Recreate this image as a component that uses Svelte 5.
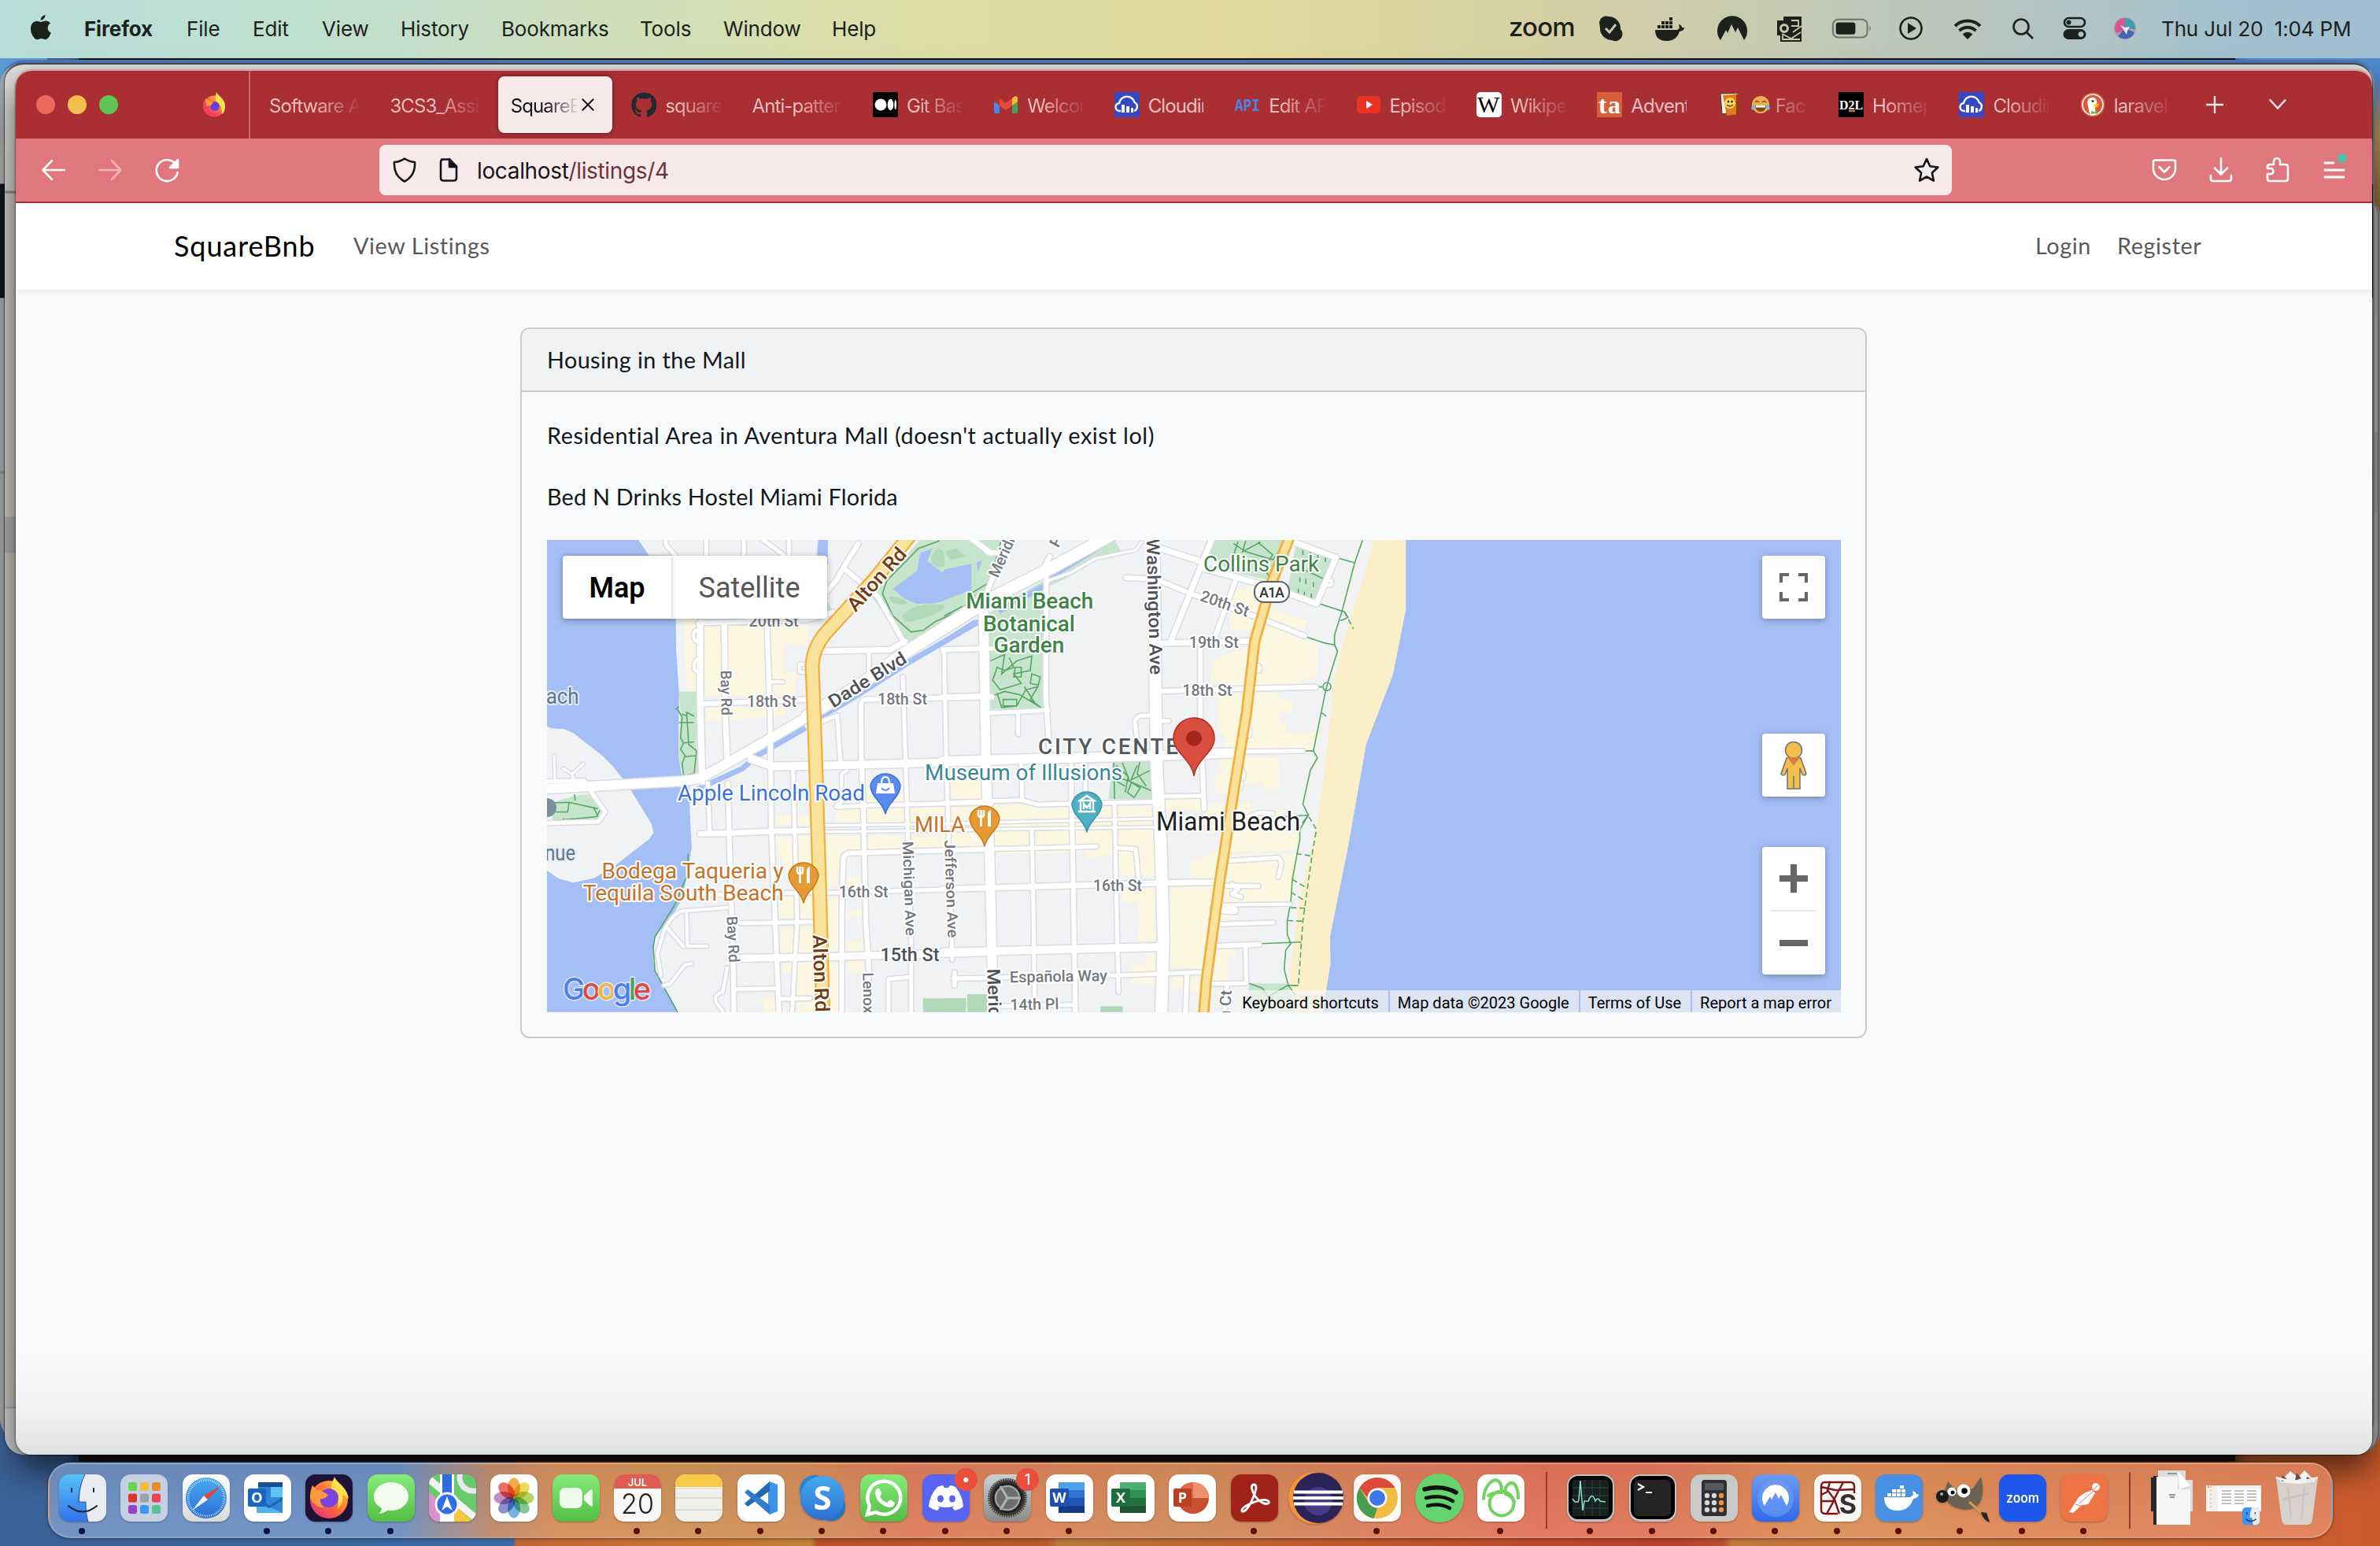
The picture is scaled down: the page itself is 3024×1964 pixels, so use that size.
<script>
  const menus = ['File', 'Edit', 'View', 'History', 'Bookmarks', 'Tools', 'Window', 'Help'];

  const tabs = [
    { label: 'Software A' },
    { label: '3CS3_Assi' },
    { label: 'SquareB', active: true },
    { icon: 'github', label: 'square' },
    { label: 'Anti-patter' },
    { icon: 'medium', label: 'Git Bas' },
    { icon: 'gmail', label: 'Welcom' },
    { icon: 'cloudinary', label: 'Cloudin', hard: true },
    { icon: 'api', label: 'Edit AP' },
    { icon: 'youtube', label: 'Episod' },
    { icon: 'wikipedia', label: 'Wikipe' },
    { icon: 'ta', label: 'Advent', hard: true },
    { icon: 'book', label: 'Fac', emoji: true },
    { icon: 'd2l', label: 'Homep' },
    { icon: 'cloudinary', label: 'Cloudin' },
    { icon: 'duck', label: 'laravel' }
  ];

  const apps = [
    ['finder', 1], ['launchpad', 0], ['safari', 0], ['outlook', 1], ['firefox', 1], ['messages', 1],
    ['maps', 0], ['photos', 0], ['facetime', 0], ['calendar', 1], ['notes', 1], ['vscode', 1],
    ['skype', 1], ['whatsapp', 1], ['discord', 1], ['settings', 1], ['word', 1], ['excel', 0],
    ['powerpoint', 0], ['acrobat', 1], ['eclipse', 0], ['chrome', 1], ['spotify', 0], ['mongo', 1]
  ];
  const recents = [
    ['activity', 1], ['terminal', 1], ['calculator', 1], ['nord', 1], ['spyder', 1],
    ['docker', 1], ['gimp', 1], ['zoom', 1], ['postman', 1]
  ];

  // The map is surveyed on two sheets, west and east, that share one scale.
  const SX = 0.3827;
  const SY = 0.4082;
  const west = `translate(-35 -26) scale(${SX} ${SY})`;
  const east = `translate(505 -26) scale(${SX} ${SY})`;

  const yellowWest = [
    '545,310 588,310 588,530 555,530', '605,330 820,330 820,548 605,548', '620,585 880,585 885,612 830,615 620,628',
    '835,335 960,325 955,390 880,390 880,475 915,475 915,560 835,560', '850,918 960,918 962,950 850,952',
    '922,985 970,985 975,1145 922,1145', '855,990 905,990 905,1150 860,1030', '862,1175 978,1175 982,1240 865,1240',
    '868,1270 990,1270 992,1350 870,1350', '875,1378 1000,1378 1000,1533 925,1533 920,1408 875,1408',
    '1012,985 1540,985 1540,1022 1100,1034 1062,1060 1055,1140 1015,1145', '1050,902 1560,895 1560,940 1050,945',
    '1440,790 1540,790 1540,872 1440,876', '1150,835 1270,830 1270,880 1150,884', '1090,1110 1132,1110 1132,1150 1090,1150',
    '1015,1175 1060,1175 1060,1230 1135,1210 1135,1235 1060,1245 1060,1340 1015,1340', '1090,1310 1140,1308 1145,1410 1090,1408',
    '1020,1380 1060,1380 1060,1533 1025,1533', '805,1490 845,1490 848,1533 812,1533'
  ];
  const yellowEast = [
    '955,225 1030,200 1060,270 1205,315 1180,370 1240,385 1237,490 1185,500 1185,520 1010,530 1030,350 945,340',
    '905,430 1005,395 992,520 883,505 890,440', '910,545 995,540 975,718 930,712 930,670 905,660',
    '1015,540 1110,540 1110,560 1160,562 1155,600 1118,602 1115,630 1138,635 1135,662 1250,662 1232,716 990,720',
    '988,740 1110,740 1112,838 1060,840 1055,815 975,830', '905,745 965,745 950,850 900,850 900,800 925,780',
    '0,790 125,790 125,868 20,874', '730,870 850,868 850,905 730,905', '0,900 255,884 310,900 700,892 700,960 0,968',
    '0,975 125,975 125,1035 0,1038', '165,970 700,965 700,1108 585,1108 575,1035 475,1060 475,1035 165,1040',
    '875,890 1020,878 1010,900 1120,905 1120,970 1178,980 1165,1030 935,1035 925,960 870,960', '590,1145 702,1142 708,1310 640,1310 650,1240 635,1190 590,1190',
    '750,1145 900,1142 870,1398 750,1395', '815,1068 925,1022 912,1118 815,1112', '945,1040 1175,1040 1155,1190 930,1192',
    '920,1205 975,1205 970,1240 910,1245', '900,1340 965,1335 965,1360 940,1365 940,1435 890,1438', '668,1355 708,1352 708,1445 618,1445 620,1385 668,1385',
    '755,1425 800,1425 800,1460 755,1458', '815,1425 868,1425 860,1470 812,1470'
  ];

  const roadsWest = [
    ['M600 322L600 560L607 815', 8], ['M595 322L960 312L1040 288', 6], ['M680 330L684 620L690 750', 7], ['M822 335L832 600L836 960L845 1160L862 1540', 6],
    ['M590 345Q578 345 578 360Q578 378 590 380M592 435Q578 440 580 460Q580 472 594 475', 4],
    ['M692 820L700 1100L710 1390L712 1540', 6], ['M625 820L632 975', 5], ['M908 780L915 1000L922 1250L915 1370L905 1540', 5],
    ['M1568 552L1150 560Q1133 562 1134 580L1135 740L1142 900L1150 1250L1160 1400L1155 1540', 6], ['M1273 490L1282 760L1290 1000L1300 1300L1300 1540', 5],
    ['M1568 402L1420 405Q1410 406 1410 420L1417 740L1425 1000L1437 1370', 5], ['M1005 628L1055 610L1066 760', 5], ['M1088 782L1070 790L1070 878L1050 892', 4],
    ['M1568 1026L1095 1038Q1075 1042 1075 1060L1070 1230L1070 1540', 6], ['M610 574L960 560', 6], ['M1005 410L1230 405L1280 380', 7], ['M1160 410L1160 470', 5],
    ['M770 745L840 768L1000 766L1568 752', 10], ['M600 978L690 976L840 970L975 968', 7], ['M1055 895L1140 890L1568 881', 5],
    ['M1012 952L1568 946', 3], ['M1012 972L1568 966', 3], ['M1016 1162L1568 1148', 5], ['M640 1168L975 1160', 5], ['M735 1256L985 1252', 5], ['M715 1366L980 1362L1568 1346', 9],
    ['M720 1462L850 1459', 5], ['M862 1492L965 1490', 5], ['M690 1208L545 1218Q510 1222 480 1280L458 1350L470 1420', 4], ['M555 1225L558 1328L622 1328M490 1270L545 1330', 4],
    ['M480 1450L500 1445L550 1385L572 1382', 4], ['M690 1395L675 1470Q640 1480 655 1505L675 1530', 4],
    ['M485 60L487 80L525 120M620 60L620 120M745 60L745 120M895 60L895 120M805 60L890 120', 5],
    ['M1020 225L1055 185L1075 150L1125 75M1075 150L1190 240L1275 380', 6], ['M1500 60L1568 105', 6],
    ['M91 945L262 940L285 910L240 850L215 812L91 815', 5], ['M115 735L118 812M145 775L175 792L212 760M175 792L180 812', 3],
    ['M1225 1540L1225 1430L1300 1424', 5], ['M1445 1410L1445 1450M1445 1428L1540 1428', 5], ['M955 450L930 450L930 475L955 475', 4], ['M840 505L875 505', 4],
    ['M91 838L540 814Q600 808 620 795L710 748L960 612', 12], ['M955 612L1130 515L1290 408L1568 245', 15]
  ];
  const roadsEast = [
    ['M130 290L138 780L150 1050L162 1540', 12], ['M850 385L850 620L862 900', 6], ['M888 60L750 382', 7], ['M970 180L900 362', 6],
    ['M603 181L700 185L830 235L1060 312L1195 362', 6], ['M700 85L850 130M850 150L1085 210L1235 262L1300 118L1165 72', 7], ['M1265 190L1285 190Q1290 205 1275 205', 4],
    ['M715 385L1020 378', 7], ['M715 534L1000 526L1232 521', 6], ['M640 690L632 628Q640 610 660 610L700 610M720 626L745 627', 5],
    ['M-5 752L700 735L975 726', 12], ['M980 722L1190 720', 5], ['M-5 882L255 873L310 887L700 878M725 862L860 860', 5],
    ['M-5 946L700 931', 3], ['M-5 966L700 957', 3], ['M30 1028L505 1018', 5], ['M-5 1150L700 1132L905 1128', 7], ['M-5 1347L710 1330', 10],
    ['M30 1428L600 1418L870 1408', 5], ['M33 1410L33 1450', 5], ['M170 1515L430 1510', 5], ['M290 965L296 1250L300 1540', 5], ['M420 765L425 1000L435 1540', 6],
    ['M565 885L570 1150L578 1470', 5], ['M580 1022L635 1025L645 1125', 5], ['M255 765L258 870M468 765L468 840', 5], ['M-5 405L120 402M-5 552L120 549', 6],
    ['M150 602L345 594M245 602L245 668', 5], ['M338 180L336 540L350 742', 6], ['M330 150L350 115', 6], ['M100 64L145 102L190 105', 6], ['M140 230L190 110', 6],
    ['M805 1415L800 1540', 6], ['M945 1062L1108 1052Q1120 1060 1118 1080L1108 1112', 5], ['M925 1140L1042 1141M955 1135L975 1150L955 1165L985 1175', 5], ['M905 1200L1148 1197', 4],
    ['M905 1260L1092 1254', 5], ['M890 1205Q885 1220 965 1222Q975 1210 950 1208L900 1215M885 1245L895 1250', 5], ['M892 1328L1045 1322', 6], ['M1000 1330L1002 1443L885 1445M938 1445L930 1540', 5],
    ['M1035 452Q1050 455 1045 470L1030 470M1005 640Q1018 650 1012 672L1003 675M985 778Q1000 790 990 805M978 815Q992 822 982 835', 5], ['M1010 925L1045 912L1090 915', 5],
    ['M695 60L700 480L704 760L718 1000L727 1300L720 1540', 15], ['M-5 338L120 262L360 148L560 45', 15], ['M340 192L420 165L500 122L635 95L655 70', 3]
  ];

  // sheet, x, baseline, size, drawn width, text, colour class, weight, rotation
  const labels = [
    ['w', 762, 332, 19.5, 63, '20th St', 'street', 500, 0], ['w', 755, 583, 19.5, 63, '18th St', 'street', 500, 0], ['w', 1189, 575, 19.5, 63, '18th St', 'street', 500, 0],
    ['w', 1060, 1175, 19.5, 63, '16th St', 'street', 500, 0], ['w', 1198, 1375, 24, 75, '15th St', 'avenue', 500, 0],
    ['w', 668, 470, 19, 57, 'Bay Rd', 'street', 500, 89], ['w', 688, 1235, 19, 59, 'Bay Rd', 'street', 500, 87],
    ['w', 1272, 1002, 19, 120, 'Michigan Ave', 'street', 500, 88], ['w', 1411, 998, 19, 124, 'Jefferson Ave', 'street', 500, 88], ['w', 1140, 1410, 19, 52, 'Lenox', 'street', 500, 89],
    ['w', 1116, 290, 25, 99, 'Alton Rd', 'highway', 500, -48], ['w', 974, 1293, 25, 98, 'Alton Rd', 'highway', 500, 88],
    ['w', 1042, 588, 23, 112, 'Dade Blvd', 'avenue', 500, -32],
    ['w', 88, 573, 27, 42, 'ach', 'area', 400, 0], ['w', 84, 1060, 27, 39, 'nue', 'area', 400, 0],
    ['w', 525, 875, 27.5, 238, 'Apple Lincoln Road', 'shop', 400, 0], ['w', 1312, 973, 27.5, 64, 'MILA', 'food', 400, 0],
    ['w', 273, 1116, 27.5, 231, 'Bodega Taqueria y', 'food', 400, 0], ['w', 211, 1186, 27.5, 255, 'Tequila South Beach', 'food', 400, 0],
    ['e', -65, 811, 27.5, 251, 'Museum of Illusions', 'museum', 400, 0],
    ['e', 178, 184, 20, 54, 'Meridi', 'street', 500, -66], ['e', 378, 90, 20, 24, 'Pa', 'street', 500, -62],
    ['e', 671, 60, 23, 173, 'Washington Ave', 'avenue', 500, 88.5], ['e', 142, 1398, 23, 94, 'Meridian', 'avenue', 500, 88],
    ['e', 846, 252, 20, 64, '20th St', 'street', 500, 19], ['e', 812, 400, 19.5, 63, '19th St', 'street', 500, 0], ['e', 790, 548, 19.5, 63, '18th St', 'street', 500, 0],
    ['e', 494, 1156, 19.5, 62, '16th St', 'street', 500, 0], ['e', 217, 1441, 20, 124, 'Española Way', 'street', 500, -1], ['e', 218, 1527, 20, 62, '14th Pl', 'street', 500, -1],
    ['e', 948, 1556, 20, 37, 'n Ct', 'street', 500, -87],
    ['e', 71, 278, 28, 162, 'Miami Beach', 'park', 500, 0], ['e', 128, 347, 28, 117, 'Botanical', 'park', 500, 0], ['e', 163, 415, 28, 90, 'Garden', 'park', 500, 0],
    ['e', 860, 161, 27.5, 147, 'Collins Park', 'park', 400, 0],
    ['e', 311, 729, 28, 178, 'CITY CENTE', 'district', 500, 0], ['e', 703, 968, 33, 183, 'Miami Beach', 'city', 400, 0]
  ];
  const place = ([sheet, x, y, size, width, text, kind, weight, turn]) => ({
    x: x * SX + (sheet === 'w' ? -35 : 505), y: y * SY - 26, size, width, text, kind, weight, turn
  });
  const mapLabels = labels.map(place);
</script>

{#snippet favicon(name)}
  <svg class="favicon" viewBox="0 0 32 32">
    {#if name === 'github'}
      <path fill="#24292f" d="M16 .4a16 16 0 0 0-5 31.1c.8.2 1.1-.3 1.1-.8v-2.800c-4.500 1-5.400-1.900-5.400-1.900-.7-1.900-1.800-2.400-1.800-2.400-1.500-1 .1-1 .1-1 1.600.1 2.500 1.700 2.500 1.700 1.400 2.400 3.700 1.700 4.600 1.300.2-1 .6-1.700 1-2.100-3.500-.4-7.300-1.800-7.300-7.900 0-1.800.6-3.200 1.700-4.300-.2-.4-.7-2 .1-4.200 0 0 1.400-.4 4.400 1.600a15 15 0 0 1 8 0c3-2 4.400-1.600 4.400-1.600.9 2.200.3 3.800.2 4.200 1 1.100 1.600 2.500 1.600 4.300 0 6.100-3.700 7.500-7.300 7.900.6.500 1.100 1.500 1.100 3v4.400c0 .4.3 1 1.100.8A16 16 0 0 0 16 .4z" />
    {:else if name === 'medium'}
      <rect width="32" height="32" rx="2" /><circle cx="10" cy="16" r="7.500" fill="#fff" /><ellipse cx="22.500" cy="16" rx="3.800" ry="7.200" fill="#fff" /><ellipse cx="28.700" cy="16" rx="1.300" ry="6.300" fill="#fff" />
    {:else if name === 'gmail'}
      <path fill="#4a86ee" d="M1 9v16a2 2 0 0 0 2 2h5V14z" /><path fill="#43a556" d="M31 9v16a2 2 0 0 1-2 2h-5V14z" /><path fill="#f4bd34" d="M24 8l3-2.500c2-1 4 .5 4 2.500v4l-7 5z" /><path fill="#b83228" d="M8 8L5 5.500C3 4.500 1 6 1 8v4l7 5z" /><path fill="#e04b3e" d="M8 8l8 6 8-6v9l-8 6-8-6z" />
    {:else if name === 'cloudinary'}
      <rect width="32" height="32" fill="#3448c5" /><path d="M8 24H7a5 5 0 0 1-1-10 10 10 0 0 1 19.500-1A6 6 0 0 1 25 24" fill="none" stroke="#fff" stroke-width="2.400" /><path fill="#fff" d="M9 16h4v10H9zM15 18h4v8h-4zM21 20h3v6h-3z" />
    {:else if name === 'api'}
      <text x="0" y="24" class="api" textLength="32" lengthAdjust="spacingAndGlyphs">API</text>
    {:else if name === 'youtube'}
      <rect x="1" y="5" width="30" height="22" rx="5" fill="#ea3323" /><path fill="#fff" d="M13 11l8 5-8 5z" />
    {:else if name === 'wikipedia'}
      <rect width="32" height="32" rx="5" fill="#fff" /><text x="1" y="26" class="wiki" textLength="30">W</text>
    {:else if name === 'ta'}
      <rect width="32" height="32" fill="#d65f39" /><text x="2" y="27" class="ta" textLength="28">ta</text>
    {:else if name === 'book'}
      <path fill="#f6efe0" stroke="#333" d="M3 2l22-1v24l-20 3z" /><path fill="#df7a22" d="M6 4l20-2v26l-15 2z" /><path fill="#9b3a1b" d="M23 4l4-2v26l-4 3z" /><circle cx="15" cy="14" r="7" fill="#fbd24e" /><circle cx="13" cy="12" r="1.200" /><circle cx="17.500" cy="12" r="1.200" /><path d="M11 16q4 4 8 0" fill="none" stroke="#000" />
    {:else if name === 'd2l'}
      <rect width="32" height="32" /><text x="1" y="22" class="d2l" textLength="30" lengthAdjust="spacingAndGlyphs">D2L</text><path stroke="#e87511" stroke-width="2" d="M13 24h8" />
    {:else if name === 'duck'}
      <circle cx="16" cy="16" r="15.500" fill="#de5833" /><circle cx="16" cy="16" r="13" fill="none" stroke="#fff" stroke-width="1.600" /><path fill="#fff" d="M12 27c-1-6-4-14-2-17 1-3 5-4 8-3 3 2 4 5 3 8l-2 6 1 7q-4 2-8-1z" /><circle cx="16" cy="11.500" r="1.300" /><path fill="#fdd20a" d="M17 16q5-2 8-1-2 2-4 2 2 1 3 1-4 2-7 0z" /><path fill="#65bc46" d="M14 24l4 1 4-1v4l-4-1-4 1z" />
    {:else}
      <circle cx="16" cy="18" r="13.500" fill="url(#g-fox)" /><path fill="#ffe14a" d="M19 0c2 5 11 8 11 18 0 4-1 8-4 10 0-5 0-10-5-13-4-4-4-9-2-15z" /><path fill="#f5405a" d="M2 14c1-3 2-5 4-6 0 2 3 4 8 4-3 1-5 4-5 8 0 6 8 9 15 5-2 5-8 6.500-12 5C4 28 1 21 2 14z" /><circle cx="17" cy="18" r="6" fill="#6b3de0" /><path fill="#ff9f2e" d="M5 8l4 3 6 2-3 4-6 1z" />
    {/if}
  </svg>
{/snippet}

{#snippet office(letter, a, b, c, d, badge)}
  <rect width="60" height="60" rx="13" fill="#fff" />
  <path fill={a} d="M16 10h33v10H16z" /><path fill={b} d="M16 20h33v10H16z" /><path fill={c} d="M16 30h33v10H16z" /><path fill={d} d="M16 40h33v9H16z" />
  <rect x="5" y="18" width="24" height="23" rx="2" fill={badge} />
  <text x="17" y="36" class="office-letter">{letter}</text>
{/snippet}

{#snippet appIcon(name)}
  <svg class="app-icon" viewBox="0 0 60 60">
    {#if name === 'finder'}
      <rect width="60" height="60" rx="13" fill="url(#g-finder)" /><path fill="#e9ebf1" d="M33 0h14a13 13 0 0 1 13 13v34a13 13 0 0 1-13 13H37q-3-10-3-25h-8q0-20 7-35z" /><path fill="none" stroke="#16202d" stroke-width="2" stroke-linecap="round" d="M12 40q18 15 36 0M16 18v4M44 18v4" /><path fill="none" stroke="#1d3f70" stroke-width=".8" d="M33 0q-8 15-8 35h9q0 15 3 25" />
    {:else if name === 'launchpad'}
      <rect width="60" height="60" rx="13" fill="#c5d1e2" />
      {#each ['#6bd34b', '#f3bb3c', '#e98b32', '#d8352c', '#9ba1a6', '#ee4458', '#9345c9', '#3c98f3', '#5dc19a'] as tile, i}
        <rect x={10 + (i % 3) * 15} y={10 + Math.floor(i / 3) * 14.500} width="11" height="11" rx="2.500" fill={tile} />
      {/each}
    {:else if name === 'safari'}
      <rect width="60" height="60" rx="13" fill="url(#g-paper)" /><circle cx="30" cy="30" r="26" fill="url(#g-blue)" /><circle cx="30" cy="30" r="23" fill="none" stroke="#fff" stroke-opacity=".8" stroke-width="3" stroke-dasharray=".8 1.600" /><path fill="#e8433a" d="M49 14L27 27l5 5z" /><path fill="#f4f4f4" d="M12 46l15-19 5 5z" />
    {:else if name === 'outlook'}
      <rect width="60" height="60" rx="13" fill="#fff" /><path fill="#1c4f91" d="M18 10h31v6H18z" /><path fill="#2f7ed2" d="M18 16h16v13H18z" /><path fill="#5fc4f5" d="M34 16h15v13H34z" /><path fill="#2f86d8" d="M16 29h33v20H16z" /><path fill="#52b1ea" d="M16 49V34l33 15z" /><path fill="#1e62b4" d="M16 29l16 11 17-11v4l-17 10-16-9z" /><rect x="5" y="18" width="23" height="23" rx="2" fill="#1b65c2" /><text x="16.500" y="36" class="office-letter">O</text>
    {:else if name === 'firefox'}
      <rect width="60" height="60" rx="13" fill="#1e1236" /><circle cx="30" cy="32" r="24" fill="url(#g-fox)" /><path fill="#ffdf4a" d="M37 3c3 8 16 13 18 28-3-4-6-5-8-4 2 8-2 13-6 17 2-10 0-16-7-22-3-7 1-13 3-19z" /><circle cx="30" cy="30" r="12" fill="#7a43e0" /><path fill="#ff9a3c" d="M9 14l6 6q4-1 7 2l7 4q-4 6-10 5-1 7 5 12-13-2-18-13 0-9 3-16z" />
    {:else if name === 'messages'}
      <rect width="60" height="60" rx="13" fill="url(#g-green)" /><ellipse cx="30" cy="28" rx="22" ry="18" fill="#f3fbf0" /><path fill="#f3fbf0" d="M18 38q1 7-3 12 8-1 13-7z" />
    {:else if name === 'maps'}
      <clipPath id="maps-clip"><rect width="60" height="60" rx="13" /></clipPath>
      <g clip-path="url(#maps-clip)"><path fill="#66cb6b" d="M0 0h60v60H0z" /><path fill="#df8fd0" d="M0 22l14 14v24H0z" /><path fill="#f5c83e" d="M32 60V38l24 22z" /><path stroke="#f3f3f1" stroke-width="9" d="M0 6l60 50" /><path stroke="#fff" stroke-width="18" d="M23 0v60" /><path stroke="#2f6bdd" stroke-width="12" d="M23 0v30" /><circle cx="56" cy="4" r="17" fill="none" stroke="#e7e8ea" stroke-width="7" /></g>
      <circle cx="23" cy="38" r="14" fill="#2d6ee8" stroke="#f4f4f4" stroke-width="3" /><path fill="#fff" d="M23 28l7 18-7-5-7 5z" />
    {:else if name === 'photos'}
      <rect width="60" height="60" rx="13" fill="#fff" />
      {#each ['#f29a2c', '#e9d636', '#a8cd4b', '#6fbf86', '#5aa4dd', '#7a7dc8', '#b779b5', '#ea5448'] as petal, i}
        <ellipse class="petal" cx="30" cy="17" rx="8" ry="12.500" fill={petal} transform="rotate({i * 45} 30 30)" />
      {/each}
    {:else if name === 'facetime'}
      <rect width="60" height="60" rx="13" fill="url(#g-green)" /><rect x="9" y="17" width="29" height="26" rx="7" fill="#eefaec" /><path fill="#eefaec" d="M40 27l8-7q3-2 3 2v17q0 3-3 1l-8-7z" />
    {:else if name === 'calendar'}
      <rect width="60" height="60" rx="13" fill="#f7f7f6" /><path fill="#e25b52" d="M13 0h34a13 13 0 0 1 13 13v5H0v-5A13 13 0 0 1 13 0z" /><text x="30" y="14.500" class="cal-month">JUL</text><text x="30" y="50" class="cal-day" textLength="42" lengthAdjust="spacingAndGlyphs">20</text>
    {:else if name === 'notes'}
      <rect width="60" height="60" rx="13" fill="#f1f0ed" /><path fill="#f7cb45" d="M13 0h34a13 13 0 0 1 13 13v3H0v-3A13 13 0 0 1 13 0z" /><path stroke="#c2bfb7" stroke-width="1.200" stroke-dasharray="1.500 1" d="M0 18h60" /><path stroke="#d5d4d2" stroke-width="1.500" d="M0 30h60M0 45h60" />
    {:else if name === 'vscode'}
      <rect width="60" height="60" rx="13" fill="#fff" /><path fill="#3b93e6" d="M41 9l10 4v34l-10 4-2-3V12z" /><path fill="#2768b0" d="M41 9v12L13 41l-4-4z" /><path fill="#2f7ccc" d="M9 23l4-4 28 20v12z" />
    {:else if name === 'skype'}
      <circle cx="20" cy="20" r="19" fill="#2c86cf" /><circle cx="41" cy="41" r="18" fill="#2474c4" /><circle cx="30" cy="30" r="28" fill="url(#g-blue)" /><text x="30" y="45" class="skype">S</text>
    {:else if name === 'whatsapp'}
      <rect width="60" height="60" rx="13" fill="url(#g-green)" /><path fill="none" stroke="#fff" stroke-width="4.500" d="M9 51l3-11a21 21 0 1 1 8 8z" /><path fill="#fff" d="M20 19q3-3 5 0l2 5q0 2-2 4 3 6 9 8l3-3q1-1 3 0l4 3q0 5-6 6-9-1-15-8-6-8-3-15z" />
    {:else if name === 'discord'}
      <rect width="60" height="60" rx="13" fill="#5865f2" /><path fill="#fff" d="M19 16q5-2 7-2l2 3h5l2-3q3 0 7 2 9 11 10 25-5 4-11 5l-3-4 3-2q-11 4-22 0l3 2-3 4q-6-1-11-5 1-14 11-25z" /><ellipse cx="23" cy="31" rx="4" ry="4.500" fill="#5865f2" /><ellipse cx="38" cy="31" rx="4" ry="4.500" fill="#5865f2" />
    {:else if name === 'settings'}
      <rect width="60" height="60" rx="13" fill="url(#g-grey)" /><circle cx="30" cy="30" r="25" fill="#3a3a3a" /><circle cx="30" cy="30" r="24" fill="none" stroke="#999" stroke-width="3" stroke-dasharray="1.500 1.500" /><circle cx="30" cy="30" r="18" fill="#6d6d6d" stroke="#1f1f1f" stroke-width="3" /><path stroke="#b5b5b5" stroke-width="3" d="M30 30h17M30 30l-9-15M30 30l-9 15" /><circle cx="30" cy="30" r="15" fill="none" stroke="#a4a4a4" stroke-width="2" />
    {:else if name === 'word'}
      {@render office('W', '#4ea0e8', '#2e74d0', '#1f54b8', '#163b86', '#1f4fb0')}
    {:else if name === 'excel'}
      {@render office('X', '#4aae74', '#2f9158', '#25703f', '#1f5632', '#1d6f3f')}
    {:else if name === 'powerpoint'}
      <rect width="60" height="60" rx="13" fill="#fff" /><circle cx="31" cy="30" r="20" fill="#c9502f" /><path fill="#ee8f6e" d="M31 10a20 20 0 0 1 20 20H31z" /><path fill="#dd6a48" d="M31 10a20 20 0 0 0-20 20h20z" /><rect x="6" y="18" width="23" height="23" rx="2" fill="#bb3f20" /><text x="17.500" y="36" class="office-letter">P</text>
    {:else if name === 'acrobat'}
      <rect width="60" height="60" rx="13" fill="#a12219" /><path fill="none" stroke="#fff" stroke-width="2.800" d="M29 13c-5 0-2 9 2 15s12 11 16 9-1-6-10-4-22 8-23 12 4 3 9-5 9-20 9-23-1-4-3-4z" />
    {:else if name === 'eclipse'}
      <circle cx="28" cy="30" r="33" fill="#f29437" /><circle cx="33" cy="30" r="32" fill="#2b2255" /><circle cx="33" cy="34" r="18" fill="#443a85" /><path stroke="#fff" stroke-width="4.200" d="M2 22.500h62M1 30h64M2 37.500h62" />
    {:else if name === 'chrome'}
      <rect width="60" height="60" rx="13" fill="#fff8f4" /><circle cx="30" cy="30" r="26" fill="#f0bd42" /><path fill="#dc4a3d" d="M7.500 17a26 26 0 0 1 45 0H30L18 30z" /><path fill="#4a9c51" d="M7.500 17L19 36l11 7-4.500 13A26 26 0 0 1 7.500 17z" /><circle cx="30" cy="30" r="12.500" fill="#fff" /><circle cx="30" cy="30" r="10" fill="#3f78e6" />
    {:else if name === 'spotify'}
      <circle cx="30" cy="30" r="31" fill="#65d46e" /><path fill="none" stroke="#121212" stroke-width="5.500" stroke-linecap="round" d="M11 19q22-6 40 4" /><path fill="none" stroke="#121212" stroke-width="4.500" stroke-linecap="round" d="M13 30q19-5 34 4M15 40q15-4 28 3" />
    {:else if name === 'mongo'}
      <rect width="60" height="60" rx="13" fill="#fff" /><circle cx="31" cy="37" r="15.500" fill="none" stroke="#70d35f" stroke-width="4" /><path fill="none" stroke="#70d35f" stroke-width="4" stroke-linecap="round" d="M8 31C9 14 20 5 26 8c5 3 5 9 5 15-6-1-12 1-17 4M52 30C52 18 48 9 42 11c-5 2-8 8-6 14q7 2 11 9" />
    {:else if name === 'activity'}
      <rect width="60" height="60" rx="14" fill="#bfc3c2" /><rect x="2" y="2" width="56" height="55" rx="12" fill="#060606" /><rect x="7" y="7" width="46" height="46" rx="3" fill="#18211f" /><path stroke="#36504b" stroke-width=".8" d="M7 17h46M7 27h46M7 43h46M22 7v46M32 7v46M42 7v46" /><path fill="none" stroke="#8fe0cd" stroke-width="1.500" d="M7 31l3 4 4 0 1 -3 2 -24 3 38 2-12h5q5-13 9 0 3-6 6 0l7 1" />
    {:else if name === 'terminal'}
      <rect width="60" height="60" rx="14" fill="#c4c4c4" /><rect x="2" y="2" width="56" height="55" rx="12" fill="#000" /><rect x="6" y="7" width="47" height="46" rx="6" fill="#242424" /><path fill="none" stroke="#fff" stroke-width="2.200" d="M11 12l7 4-7 4M21 23h8" />
    {:else if name === 'calculator'}
      <rect width="60" height="60" rx="13" fill="#c9c9c8" /><rect x="14" y="7" width="32" height="46" rx="4" fill="#2d2f32" /><rect x="18" y="11" width="24" height="9" rx="1" fill="#55585c" />
      {#each [0, 1, 2, 3, 4, 5, 6, 7, 8] as key}
        <circle cx={21 + (key % 3) * 9} cy={27 + Math.floor(key / 3) * 9} r="3.200" fill={key % 3 === 2 ? '#f2932f' : '#d6d6d6'} />
      {/each}
    {:else if name === 'nord'}
      <rect width="60" height="60" rx="13" fill="url(#g-nord)" /><circle cx="30" cy="31" r="23" fill="#6ea0f7" opacity=".6" /><path fill="#fff" d="M16 40a17 17 0 1 1 28 0l-7-14-3 5-4-8-5 9-2-4z" />
    {:else if name === 'spyder'}
      <rect width="60" height="60" rx="13" fill="#faf8f6" /><path fill="none" stroke="#7d1419" stroke-width="2.400" d="M30 50H14q-5 0-5-5V15q0-5 5-5h32q5 0 5 5v9M9 16l18 4 24-1M20 10l-3 10 9 12-10 18M9 34h15L37 10M9 26l8-4M26 32l6 18" /><text x="43" y="50" class="spyder">S</text>
    {:else if name === 'docker'}
      <rect width="60" height="60" rx="13" fill="#4790e4" /><path fill="#fff" d="M11 29h33l4-3-1-5q4 1 5 4h3q0 5-7 6-5 15-20 15-17 0-17-17zM15 24h5v4h-5zM21 24h5v4h-5zM27 24h5v4h-5zM33 24h5v4h-5zM21 19h5v4h-5zM27 19h5v4h-5zM33 19h5v4h-5zM31 14h5v4h-5z" />
    {:else if name === 'gimp'}
      <path fill="#6b6253" d="M14 9l8 9q12 2 24 0L56 3q5 20-1 32-8 12-23 9Q16 42 8 27z" /><circle cx="7" cy="28" r="8" fill="#1b1b1b" /><circle cx="6" cy="25" r="2" fill="#aaa" /><circle cx="34" cy="21" r="8.500" fill="#fff" /><circle cx="19" cy="22" r="5.500" fill="#fff" /><circle cx="35" cy="21" r="3.800" /><circle cx="20" cy="23" r="2.500" /><path stroke="#d9955f" stroke-width="3" d="M41 35l16 14" /><path fill="#222" d="M56 48l7 1 4 12q-8-3-11-13z" />
    {:else if name === 'zoom'}
      <rect width="60" height="60" rx="13" fill="#1e57ec" /><text x="30" y="36" class="zoom-app" textLength="42" lengthAdjust="spacingAndGlyphs">zoom</text>
    {:else if name === 'postman'}
      <rect width="60" height="60" rx="13" fill="#ee7446" /><circle cx="45" cy="16" r="5" fill="#fff" /><path stroke="#ee7446" d="M41 20l8-7" /><path fill="#fff" d="M40 20q3 1 4 4l-9 14-8 1-11 10-5-1 9-14q4-9 20-14z" /><path stroke="#ee7446" fill="none" d="M24 37l18-16M19 38l7 2" />
    {/if}
  </svg>
{/snippet}

{#snippet statusIcon(name)}
  <svg class="status-icon" viewBox="0 0 52 34">
    {#if name === 'check'}
      <path d="M12 10a9 9 0 0 1 12-8 15 15 0 0 1 15 16 9 9 0 0 1-11 14 15 15 0 0 1-15-16z" /><path d="M20 17l5 5 8-10" class="cut" />
    {:else if name === 'docker'}
      <path d="M8 19h28l3-2-1-5q4 1 4 4h3q0 4-6 5-4 12-16 12-15 0-15-14zM11 13h4v4h-4zM16 13h4v4h-4zM21 13h4v4h-4zM26 13h4v4h-4zM16 8h4v4h-4zM21 8h4v4h-4zM26 8h4v4h-4zM26 3h4v4h-4z" />
    {:else if name === 'nord'}
      <path d="M11 32a19 19 0 1 1 30 0l-8-16-3 6-5-10-5 11-2-4z" />
    {:else if name === 'outlook'}
      <path d="M10 7h8V2h23v32H14V26h-4z" /><circle cx="19" cy="17" r="4.500" class="cut" /><path d="M28 7h9v7h-9M30 22l11-8M17 26v5h22M16 24l12 6 12-8" class="cut thin" />
    {:else if name === 'battery'}
      <g transform="scale(.95) translate(1 1)"><rect x="1" y="5" width="46" height="24" rx="7" fill="none" stroke="#1d211c" stroke-opacity=".5" stroke-width="2.200" /><rect x="5" y="9" width="26" height="16" rx="3.500" /><path opacity=".5" d="M50 13q3 4 0 8z" /></g>
    {:else if name === 'play'}
      <circle cx="26" cy="17" r="13.500" class="line" /><path d="M22 10l11 7-11 7z" />
    {:else if name === 'wifi'}
      <path class="line wide" d="M10 14a23 23 0 0 1 32 0M15.500 20a15 15 0 0 1 21 0" /><path d="M26 31l-6.500-6.500a9 9 0 0 1 13 0z" />
    {:else if name === 'search'}
      <circle cx="24" cy="15" r="9.500" class="line" /><path class="line" d="M31 22l8 8" />
    {:else if name === 'control'}
      <rect x="13" y="4" width="26" height="11" rx="5.500" class="line" /><circle cx="18.500" cy="9.500" r="3" /><path fill-rule="evenodd" d="M18 18h16a6.500 6.500 0 0 1 0 13H18a6.500 6.500 0 0 1 0-13zM34 21a3.500 3.500 0 1 0 .1 0z" />
    {:else}
      <circle cx="26" cy="17" r="14" fill="#a9a3b6" /><path fill="#d8578e" d="M26 4a13 13 0 0 0-12 18q8 2 12-5z" /><path fill="#3f9fae" d="M26 4a13 13 0 0 1 13 14l-13-1z" /><path fill="#4a64b4" d="M17 27a13 13 0 0 0 21-5l-12-5z" /><path fill="#fff" opacity=".85" d="M20 13l6 3 6-1-3 5-1 5-3-5z" />
    {/if}
  </svg>
{/snippet}

{#snippet poi(x, y, color, edge, kind)}
  <g transform="translate({x} {y})">
    <path fill={color} stroke={edge} stroke-width="1.500" d="M0 36.500C-2 22-19 15-19 0A19.500 19.500 0 0 1 19 0C19 15 2 22 0 36.500z" />
    {#if kind === 'food'}
      <path fill="none" stroke="#fff" stroke-width="2.600" d="M-8-10v6q0 3 3.500 3t3.500-3v-6M-4.500-10V11" /><path fill="#fff" d="M4 11V-5q1-5 4-5v21z" />
    {:else if kind === 'shop'}
      <path fill="#fff" d="M-10-3h20L12 10H-12z" /><path fill="none" stroke="#fff" stroke-width="2.200" d="M-5-3q0-8 5-8t5 8" /><path fill="none" stroke={color} stroke-width="2" d="M-5 3q5 6 10 0" />
    {:else}
      <path fill="none" stroke="#fff" stroke-width="2.400" d="M-9-4L0-10 9-4zM-8-3V9M8-3V9M-11 10h22M-4 7v-7l4 5 4-5v7" />
    {/if}
  </g>
{/snippet}

<svg class="defs" width="0" height="0">
  <defs>
    <linearGradient id="g-finder" x2="0" y2="1"><stop stop-color="#57c1f8" /><stop offset="1" stop-color="#3273ec" /></linearGradient>
    <linearGradient id="g-paper" x2="0" y2="1"><stop stop-color="#fff" /><stop offset="1" stop-color="#d8d8d6" /></linearGradient>
    <linearGradient id="g-blue" x2="0" y2="1"><stop stop-color="#46aaee" /><stop offset="1" stop-color="#2d70d4" /></linearGradient>
    <linearGradient id="g-green" x2="0" y2="1"><stop stop-color="#85ec79" /><stop offset="1" stop-color="#53bd45" /></linearGradient>
    <linearGradient id="g-grey" x2="0" y2="1"><stop stop-color="#c8d1d8" /><stop offset="1" stop-color="#8b8b89" /></linearGradient>
    <linearGradient id="g-nord" x2="0" y2="1"><stop stop-color="#6d9bf5" /><stop offset="1" stop-color="#2f68ea" /></linearGradient>
    <linearGradient id="g-fox" x1="1" x2="0" y2="1"><stop stop-color="#ffd23c" /><stop offset=".5" stop-color="#ff6b3a" /><stop offset="1" stop-color="#d62a80" /></linearGradient>
  </defs>
</svg>

<div class="desktop">
  <div class="back-window far"></div>
  <div class="back-window side"></div>
  <div class="back-window blue"></div>
  <div class="back-window near"></div>

  <header class="menubar">
    <svg class="apple" viewBox="0 0 28 34"><path d="M19.500 0c.3 3-2.500 6.800-5.800 6.700C13.400 3.600 16.500.5 19.500 0zM14 9c1.500 0 3.500-1.700 6.500-1.500 2.300.1 4.200 1 5.500 2.900-5 3.200-4.300 10 .9 12.200C25.500 26.500 22.800 31 20 31.200c-2.200 0-2.800-1.300-5.500-1.300S11 31.200 9 31.200C5.500 31.200 1 24 1 17.500 1 11 5 7.800 8.700 7.700 11.200 7.700 12.600 9 14 9z" /></svg>
    <strong>Firefox</strong>
    {#each menus as menu}<span>{menu}</span>{/each}
    <span class="spacer"></span>
    <b class="zoom">zoom</b>
    {#each ['check', 'docker', 'nord', 'outlook', 'battery', 'play', 'wifi', 'search', 'control', 'siri'] as icon}
      {@render statusIcon(icon)}
    {/each}
    <time>Thu Jul 20&nbsp; 1:04 PM</time>
  </header>

  <main class="window">
    <div class="tabbar">
      <div class="lights"><i class="red"></i><i class="amber"></i><i class="green"></i></div>
      <div class="pinned">{@render favicon('firefox')}</div>
      {#each tabs as tab}
        <div class="tab" class:active={tab.active}>
          {#if tab.icon}{@render favicon(tab.icon)}{/if}
          {#if tab.emoji}
            <svg class="emoji" viewBox="0 0 24 24"><circle cx="12" cy="12" r="11" fill="#eeb04f" /><path fill="#7a4a1d" d="M5 13h14q-1 8-7 8t-7-8z" /><path fill="#fff" d="M6 13h12v2.500H6z" /><path fill="none" stroke="#7a4a1d" stroke-width="1.500" d="M5 9q2-3 5 0M14 9q3-3 5 0" /><path fill="#7bb6e8" d="M0 17q1-5 5-5 0 6-3 7zM24 17q-1-5-5-5 0 6 3 7z" /></svg>
          {/if}
          <span class="label" class:hard={tab.hard}>{tab.label}</span>
          {#if tab.active}<svg class="close" viewBox="0 0 20 20"><path d="M2 2l16 16M18 2L2 18" /></svg>{/if}
        </div>
      {/each}
      <svg class="tab-action plus" viewBox="0 0 26 26"><path d="M13 1v24M1 13h24" /></svg>
      <svg class="tab-action" viewBox="0 0 26 26"><path d="M2 6l11 12L24 6" /></svg>
    </div>

    <div class="toolbar">
      <svg class="tool" viewBox="0 0 32 32"><path d="M30 16H3M14 4L2.500 16 14 28" /></svg>
      <svg class="tool faded" viewBox="0 0 32 32"><path d="M2 16h27M18 4l11.500 12L18 28" /></svg>
      <svg class="tool" viewBox="0 0 32 32"><path d="M28 10A13.500 13.500 0 1 0 29.500 19" /><path class="solid" d="M30 3v10H20z" /></svg>
      <div class="address">
        <svg viewBox="0 0 32 32"><path d="M16 1.500q6 4 13 4.500 1 17-13 24.500Q2 23 3 6q7-.5 13-4.500z" /></svg>
        <svg viewBox="0 0 32 32"><path d="M7 2.500h10l9 9V26q0 3.500-3.500 3.500h-13Q6 29.500 6 26V6q0-3.500 3.500-3.500z" /><path class="ink" d="M17 2v10h9z" /></svg>
        <span class="url">localhost<em>/listings/4</em></span>
        <svg class="star" viewBox="0 0 32 32"><path d="M16 2l4.300 9.300 10 1.200-7.400 7 2 10L16 24.500 7.100 29.500l2-10-7.400-7 10-1.200z" /></svg>
      </div>
      <div class="tools">
        <svg class="tool" viewBox="0 0 32 32"><path d="M4 3.500h24q2 0 2 2V14a14 14 0 0 1-28 0V5.500q0-2 2-2z" /><path d="M9.500 12l6.500 6.500 6.500-6.500" /></svg>
        <svg class="tool" viewBox="0 0 32 32"><path d="M16 1v20M8 13.500l8 8 8-8M3 23v4q0 3 3 3h20q3 0 3-3v-4" /></svg>
        <svg class="tool" viewBox="0 0 32 32"><path d="M11 9V5a4 4 0 0 1 8 0v4h7q3 0 3 3v15q0 3-3 3H6q-3 0-3-3v-6h4a3.500 3.500 0 0 0 0-7H3v-2q0-3 3-3z" /></svg>
        <svg class="tool menu" viewBox="0 0 32 32"><path d="M4 7h11M4 16h24M4 25h24" /><circle cx="26" cy="1" r="6" /></svg>
      </div>
    </div>

    <nav class="site-nav">
      <a class="brand" href="#home">SquareBnb</a>
      <a class="listings" href="#listings">View Listings</a>
      <a class="login" href="#login">Login</a>
      <a class="register" href="#register">Register</a>
    </nav>

    <section class="page">
      <article class="card">
        <h1>Housing in the Mall</h1>
        <p class="about">Residential Area in Aventura Mall (doesn't actually exist lol)</p>
        <p class="address-line">Bed N Drinks Hostel Miami Florida</p>
        <div class="map">
          <svg class="canvas" viewBox="0 0 1644 600" width="1644" height="600">
            <rect width="1644" height="600" class="land" />
            <g transform={west}>
              <path class="water" d="M91 64H395L430 112H517L520 400L530 540L528 740L540 800L565 830V900L572 1020L560 1090L540 1180L510 1230L450 1300L443 1370L450 1400L527 1533H91zM992 64H1024V140H985z" />
              <path class="land" d="M91 643L105 650L150 652L180 665L275 735L310 768L348 812L375 850L440 950L445 975L430 995L320 1075L250 1115L180 1130L130 1118L91 1092z" />
              {#each yellowWest as points}<polygon {points} class="commercial" />{/each}
              <path class="green" d="M530 535H588L588 700L592 790L545 800L528 745L535 600zM1330 64H1568V245L1290 392L1240 330L1170 240L1250 150zM105 882L180 860L235 855L270 905L258 935L110 942zM1022 258L1040 280L1020 285z" />
              <path class="deep-green" d="M1370 110Q1390 75 1410 105Q1440 150 1390 148Q1360 140 1370 110zM1430 95L1480 115L1440 122zM1225 240Q1260 235 1290 260Q1240 275 1225 240zM1268 300Q1320 250 1420 268Q1370 310 1280 318zM1340 1490H1483V1533H1340zM1487 1478H1545V1533H1487z" />
              <path class="water" d="M1240 215L1320 160L1330 105L1370 90L1355 130L1400 162L1500 140L1505 190L1490 235L1380 260L1320 262L1275 245zM1518 135L1535 125L1522 165z" />
              <path class="canal" d="M590 840L740 775L790 735L950 648M1000 615L1120 548L1300 440L1525 318" />
              <path class="trail" d="M1395 66L1325 90L1220 190L1205 230L1240 300L1300 350L1340 345L1380 318L1460 285L1500 250L1560 170M518 590L530 582M525 590L540 615L535 680L545 695L535 715L550 735L540 760L545 798L580 790L588 720L562 700L555 600L580 612M530 632H580M540 605L555 612M545 695L580 692M550 738L588 735M107 882L165 880L260 900M165 880L160 910H120M110 938L255 925L268 905M245 895L262 925M183 855L185 875M145 930L152 942M560 1040L560 1100L515 1200L450 1298L444 1330L450 1405L525 1533" />
            </g>
            <g transform={east}>
              <path class="water" d="M1500 60H3000V1540H1250V1380z" />
              <path class="beach" d="M1430 60H1532V280L1490 480L1400 700L1340 1020L1280 1300L1282 1380L1255 1540H1150L1147 1400L1175 1200L1235 960L1270 720L1290 520L1330 360z" />
              {#each yellowEast as points}<polygon {points} class="commercial" />{/each}
              <path class="green" d="M0 64H190L140 215L0 285zM890 64H1130L1085 190L960 165L865 110zM1165 85L1290 118L1238 258L1140 218zM150 290L330 190V590H152zM330 215L345 185L565 64L585 97L500 125L400 185zM558 752H698V870H560L545 870zM1010 1443L1140 1445L1165 1533H1010z" />
              <path class="deep-green" d="M0 100L40 90L70 115L20 125zM0 1490H70V1533H0zM77 1478H162V1533H77zM518 1515H592V1533H518z" />
              <path class="water" d="M0 155L90 138V220L0 250zM107 135L124 125L112 165z" />
              <path class="canal" d="M0 380L105 318M345 200L180 285M350 180L565 55" />
              <path class="trail" d="M188 66L150 195L80 235M0 300L60 270M148 350V395M152 440L200 420L190 480L240 440L290 425L285 470L230 480L255 510L185 530L160 500L175 460L200 470L230 460L215 430M155 550L200 535L250 545L320 585L285 560L310 520L270 530L240 580L190 585L175 540M235 460H255V490H230zM290 480L318 490L312 515L285 510zM195 560H240V580H195zM265 520L300 570M562 755L565 870M570 765L610 800L600 850M590 755L615 815L570 800M640 765L620 810L695 775M615 815L690 845M620 820L608 850L630 865L650 835L615 815M650 750L640 790L670 830M563 810L600 830" />
              <path class="trail" d="M1388 64L1362 135L1320 285L1295 360V390L1305 410L1275 500L1265 535L1225 720L1238 742L1215 780L1190 885L1208 920L1180 965V995L1155 1120L1150 1190L1138 1250V1290L1150 1320L1133 1340L1128 1400L1142 1450L1165 1480M1300 118L1362 135M1245 262L1328 287L1340 305L1315 315M1200 365L1265 385L1295 390M1232 521H1255M1250 600L1268 612M1195 720H1225M1050 1320L1185 1315M1100 927L1208 920L1188 945M1010 1443L1055 1458L1075 1485L1140 1450H1175M960 75L1000 100L1090 125L1130 75M975 68L960 110M1000 66L990 100L1050 70M1040 70L1090 110L1060 150L1080 180M1180 150L1260 185M1190 95V110M1215 100V118M1240 110V125M1265 118V132M1175 125V140M1180 180V195M1200 185V200M1225 195V210M1175 215V230M1195 225V240M1218 230V245" />
              <path class="trail dashed" d="M1210 925L1235 965L1222 1035L1190 1250L1175 1450M1168 1040L1220 1047M1155 1120L1200 1145M1150 1160L1195 1185M1150 1208L1200 1210M1140 1248L1195 1250M1328 287L1358 340" />
              <circle class="trail" cx="1270" cy="520" r="13" />
            </g>
            <g class="casing">
              <g transform={west}>{#each roadsWest as [d, w]}<path {d} stroke-width={w + 3} />{/each}</g>
              <g transform={east}>{#each roadsEast as [d, w]}<path {d} stroke-width={w + 3} />{/each}</g>
            </g>
            <g class="paving">
              <g transform={west}>{#each roadsWest as [d, w]}<path {d} stroke-width={w} />{/each}</g>
              <g transform={east}>{#each roadsEast as [d, w]}<path {d} stroke-width={w} />{/each}</g>
            </g>
            <g class="arterial">
              <g transform={west}><path class="edge" d="M1300 45L1180 185L1015 355Q975 400 972 455L978 600L985 800L995 1100L1008 1545" /><path class="core" d="M1300 45L1180 185L1015 355Q975 400 972 455L978 600L985 800L995 1100L1008 1545" /></g>
              <g transform={east}><path class="edge narrow" d="M1150 45L1085 200L1030 380L1003 600L960 850L915 1120L870 1430L860 1545" /><path class="core narrow" d="M1150 45L1085 200L1030 380L1003 600L960 850L915 1120L870 1430L860 1545" /></g>
            </g>
            <circle cx="0" cy="340" r="12" fill="#78909c" />
            {#each mapLabels as l}
              <text class={l.kind} font-size={l.size} font-weight={l.weight} textLength={l.width} lengthAdjust={l.kind === 'district' ? 'spacing' : 'spacingAndGlyphs'} transform="translate({l.x} {l.y}) rotate({l.turn})">{l.text}</text>
            {/each}
            <g transform="translate(921 66)"><rect x="-22" y="-13" width="44" height="26" rx="12" fill="#fff" stroke="#5f6368" stroke-width="2" /><text class="shield" x="-16" y="7" textLength="32">A1A</text></g>
            {@render poi(430, 312, '#5a8bee', '#3f70d6', 'shop')}
            {@render poi(556, 353, '#e59a35', '#c47a1c', 'food')}
            {@render poi(326, 425, '#e59a35', '#c47a1c', 'food')}
            {@render poi(686, 335, '#50afc6', '#3a93aa', 'museum')}
            <path fill="#d84f40" stroke="#b22f26" stroke-width="1.500" d="M822 300C820 280 796 270 796 252a26 26 0 0 1 52 0C848 270 824 280 822 300z" /><circle cx="822" cy="252" r="10" fill="#a4261d" />
            <text class="google" x="20" y="584" textLength="112"><tspan fill="#4a80ee">G</tspan><tspan fill="#df4a3e">o</tspan><tspan fill="#eeb838">o</tspan><tspan fill="#4a80ee">g</tspan><tspan fill="#47a254">l</tspan><tspan fill="#df4a3e">e</tspan></text>
          </svg>
          <div class="map-type"><b>Map</b><span>Satellite</span></div>
          <div class="controls">
            <div class="control"><svg viewBox="0 0 36 36"><path d="M2 12V2h10M24 2h10v10M34 24v10H24M12 34H2V24" /></svg></div>
            <div class="control pegman"><svg viewBox="0 0 36 62"><g fill="#f3bf4c" stroke="#70706e" stroke-width="1.500"><path d="M9 22q9-3 18 0l7 20q-2 3-5 1l-3-8v26H10V35l-3 8q-3 2-5-1z" /><circle cx="18" cy="12" r="10.500" /></g><path fill="#d5813f" d="M10 21h16l-8 11z" /><path stroke="#70706e" d="M18 45v15" /></svg></div>
            <div class="control zooming">
              <svg viewBox="0 0 36 36"><path d="M18 0v36M0 18h36" /></svg>
              <hr />
              <svg viewBox="0 0 36 36"><path d="M0 18h36" /></svg>
            </div>
          </div>
          <footer><span>Keyboard shortcuts</span><span>Map data ©2023 Google</span><span>Terms of Use</span><span>Report a map error</span></footer>
        </div>
      </article>
    </section>
  </main>

  <div class="dock">
    <div class="shelf">
      {#each apps as [name, running]}
        <div class="app">
          {@render appIcon(name)}
          {#if name === 'discord'}<span class="badge">•</span>{/if}
          {#if name === 'settings'}<span class="badge">1</span>{/if}
          <i class:running={running}></i>
        </div>
      {/each}
    </div>
    <div class="rule"></div>
    <div class="shelf">
      {#each recents as [name, running]}
        <div class="app">{@render appIcon(name)}<i class:running={running}></i></div>
      {/each}
    </div>
    <div class="rule"></div>
    <svg class="stacks" viewBox="0 0 220 72">
      <path fill="#28282a" d="M1 10h8v43H1zM4 8h8v62H4z" /><path fill="#dcdcdc" d="M10 1h35v20H10zM40 13h14v40H40z" /><path fill="#f5f5f5" d="M8 9h29l14 17v44H8z" /><path fill="#d9d9d9" d="M35 3v22h15z" /><path fill="#fff" d="M35 2l16 18-14 5z" /><path stroke="#999" stroke-width="2" d="M24 32h8M25 35h6M22 5h12" />
      <path fill="#f3efeb" d="M71 20h70v33H71z" /><path fill="#fff" d="M86 24h55v29H86z" /><path stroke="#aaa" stroke-width="1.500" stroke-dasharray="12 4" d="M91 27h45M91 31h45M91 35h45M91 39h45M91 43h32" /><path stroke="#d0cdca" stroke-width="2" stroke-dasharray="2 3" d="M77 26v24" /><circle cx="74" cy="22" r="1" fill="#e55" /><circle cx="77" cy="22" r="1" fill="#eb5" />
      <g transform="translate(117 48) scale(.37)"><rect width="60" height="60" rx="13" fill="#3d93f4" /><path fill="#e9ebf1" d="M33 0h14a13 13 0 0 1 13 13v34a13 13 0 0 1-13 13H37l-3-25h-8q0-20 7-35z" /><path fill="none" stroke="#16202d" stroke-width="3" d="M12 40q18 15 36 0M16 16v7M44 16v7" /></g>
      <path fill="#d7d5d3" d="M160 10h53l-7 54q-1 6-7 6h-25q-6 0-7-6z" opacity=".95" /><path fill="#f4f2f0" d="M164 16l14-14 10 8 8-9 14 14-20 3z" /><path fill="#555" d="M168 7l7 6-8 2zM186 4l6 7-8 3zM199 9l8 4-9 2z" /><path stroke="#f3f2f1" stroke-width="2.500" fill="none" d="M160 10q26 9 53 0" /><path stroke="#bbb9b7" fill="none" stroke-width="2" d="M175 22l4 40M196 22l-4 42M168 38l34-8" opacity=".6" />
    </svg>
  </div>
</div>

<style>
  :global(body) { margin: 0; }
  * { box-sizing: border-box; }
  .defs { position: absolute; }
  .desktop {
    position: relative; width: 3024px; height: 1964px; overflow: hidden; isolation: isolate;
    font-family: Inter, 'Liberation Sans', sans-serif;
    background:
      linear-gradient(#4f8bd0 74px, #4f82c4 100px, #bf9656 170px, #8a6a38 260px) no-repeat right top / 200px 560px,
      linear-gradient(90deg, #5b9bd6 0, #5b9bd6 60px) no-repeat left top / 60px 120px,
      linear-gradient(90deg, #3b6196 0, #3c6ba4 652px, #bf6638 656px, #c77434 900px, #c18239 1030px, #b9502a 1038px, #b55a2c 1330px, #b9783a 1345px, #bd5c2e 1650px, #b7402a 2130px, #b7502c 2190px, #c4783c 2200px, #b96a34 2600px, #cb5a2c 3024px);
  }

  /* windows stacked behind the browser */
  .back-window { position: absolute; z-index: -1; }
  .far { left: 100px; top: 74px; width: 2740px; height: 1782px; background: #17110f; box-shadow: 0 4px 20px 4px #000a; }
  .side { left: 2900px; top: 248px; width: 122px; height: 1598px; border-radius: 26px; background: linear-gradient(#b4b1af 0 152px, #b9b9b9 154px 300px, #aba6a3 302px 402px, #b2b2b2 404px); border-right: 1px solid #6b6b6b; box-shadow: 2px 0 0 #8a8a8a; }
  .blue { left: 0; top: 76px; width: 3017px; height: 1756px; border-radius: 30px; border-top: 4px solid #4b79b8; border-right: 2px solid #8e8f92; background: linear-gradient(90deg, #0000 20px, #4b79b8 20px) no-repeat top / 100% 100px, linear-gradient(#9fa9b0 0, #a4a5a6 84px, #a9a9a9 153px, #15161c 154px 298px, #a2a3a6 299px 518px, #8b8c8e 519px 521px, #a2a3a5 522px); }
  .near { left: 6px; top: 80px; width: 3008px; height: 1768px; border-radius: 24px; border-top: 2px solid #4a4a48; background: linear-gradient(#dfddd9 0, #d5d2ce 160px, #8f8c89 161px 163px, #cfcac6 164px 574px, #b1b1b0 575px 620px, #cac5c0 621px 1705px, #a5a5a5 1706px, #d0d1d2 1708px); box-shadow: -1px 0 1px #0008; }

  .menubar {
    height: 74px; display: grid; align-items: center; padding-left: 38px; font-size: 26px; color: #1d211c;
    grid-template-columns: 69px 130px 84px 88px 100px 128px 176px 106px 138px 100px 753px 102px 68px 82px 78px 68px 90px 60px 84px 56px 76px 52px 1fr;
    background: linear-gradient(90deg, #b7ded8 0, #bbdfd5 180px, #c4dfca 520px, #dbdfab 1060px, #e3da9c 1540px, #d5cfa6 2000px, #bec8b9 2400px, #a3c0d0 2850px, #a0bfd2);
    white-space: nowrap; letter-spacing: -0.15px; padding-bottom: 2px;
  }
  .apple { width: 28px; height: 34px; fill: #1d211c; }
  .menubar strong { font-weight: 700; }
  .menubar .zoom { font-size: 33px; font-weight: 500; padding: 0 0 5px 7px; letter-spacing: -0.8px; }
  .menubar time { padding-left: 20px; }
  .status-icon { width: 52px; height: 34px; justify-self: center; fill: #1d211c; }
  .status-icon .line { fill: none; stroke: #1d211c; stroke-width: 2.600; }
  .status-icon .wide { stroke-width: 4; }
  .status-icon .cut { fill: none; stroke: #ccc9a8; stroke-width: 3; }
  .status-icon .thin { stroke-width: 1.800; }

  .window {
    width: 2994px; height: 1758px; margin: 16px 0 0 20px; border-radius: 20px; overflow: hidden; background: #f8fafc;
    display: flex; flex-direction: column; box-shadow: 0 -2px 0 #c9a5a5, 0 0 2px 1px #0006, 0 20px 40px #0009;
  }
  .tabbar {
    height: 86px; background: #aa2f33; display: grid; align-items: center; color: #e8bfc2;
    grid-template-columns: 208px 94px repeat(16, 153.4px) 76px 84px; font-size: 24px; flex: none;
  }
  .lights { display: flex; gap: 16px; padding-left: 26px; }
  .lights i { width: 24px; height: 24px; border-radius: 50%; }
  .red { background: #ec695e; } .amber { background: #f4be4f; } .green { background: #61c554; }
  .pinned { width: 90px; height: 86px; border-right: 2px solid #c66a6e; display: flex; align-items: center; padding-left: 28px; }
  .favicon { width: 32px; height: 32px; flex: none; }
  .tab { display: flex; align-items: center; height: 72px; margin: 0 4px; padding: 0 16px; border-radius: 8px; overflow: hidden; }
  .tab .favicon { margin-right: 11px; }
  .tab .label { flex: 1; min-width: 0; overflow: hidden; white-space: nowrap; letter-spacing: -0.9px; padding-top: 2px; mask-image: linear-gradient(90deg, #000 calc(100% - 56px), #0001); }
  .tab .label.hard { mask-image: none; }
  .tab.active { background: #f8e9eb; color: #15141a; box-shadow: 0 0 6px #0007; padding-right: 0; }
  .tab.active .label { flex: none; width: 84px; mask-image: linear-gradient(90deg, #000 45px, #0001); }
  .close { width: 18px; height: 18px; margin-left: 5px; fill: none; stroke: #15141a; stroke-width: 2.200; }
  .emoji { width: 24px; height: 24px; flex: none; margin: 0 7px 0 -1px; }
  .tab-action { width: 24px; height: 24px; fill: none; stroke: #f8e9eb; stroke-width: 2.500; justify-self: center; }
  .api { font: 700 22px 'Liberation Mono', monospace; fill: #4a83e8; }
  .wiki { font: 30px 'Liberation Serif', serif; fill: #000; }
  .ta { font: 700 32px 'Liberation Serif', serif; fill: #fff; }
  .d2l { font: 700 17px 'Liberation Serif', serif; fill: #fff; }

  .toolbar { height: 82px; flex: none; background: #e0777f; border-bottom: 2px solid #aa2f33; display: flex; align-items: center; padding-left: 32px; }
  .tool { flex: none; width: 32px; height: 32px; margin-right: 40px; fill: none; stroke: #fff; stroke-width: 2.600; stroke-linecap: round; stroke-linejoin: round; overflow: visible; }
  .faded { opacity: 0.45; }
  .tool .solid { fill: #fff; }
  .tool.menu { stroke-width: 2.800; margin-right: 0; }
  .tool.menu circle { fill: #51bfa4; stroke: none; }
  .address { flex: none; width: 1998px; height: 64px; margin-left: 214px; background: #f8e9eb; border-radius: 8px; display: flex; align-items: center; padding: 0 16px; }
  .address svg { width: 32px; height: 32px; margin-right: 24px; fill: none; stroke: #15141a; stroke-width: 2.600; stroke-linejoin: round; }
  .address .star { margin: 0 0 0 auto; }
  .address .ink { fill: #15141a; }
  .url { font-size: 28px; color: #15141a; letter-spacing: -0.35px; margin-left: -4px; padding-top: 2px; }
  .url em { font-style: normal; color: #6d3238; }
  .tools { display: flex; margin-left: 254px; }

  .site-nav {
    height: 110px; flex: none; background: #fff; box-shadow: 0 4px 8px #0000000e; z-index: 1; display: grid; align-items: center;
    grid-template-columns: 227px 2137px 104px 1fr; padding: 0 0 2px 202px; font: 28.800px Lato, sans-serif; letter-spacing: 0.600px;
  }
  .site-nav a { color: #595959; text-decoration: none; white-space: nowrap; }
  .site-nav .brand { font-size: 36px; color: #000; letter-spacing: 0.900px; margin-left: -1px; }

  .page { flex: 1; padding: 48px 0 0 641px; background: linear-gradient(#0000 1340px, #00000007 1420px, #0000001a 1480px); }
  .card { width: 1711px; height: 903px; border: 2px solid #c9cbcd; border-radius: 12px; font: 28.800px Lato, sans-serif; color: #14171a; overflow: hidden; }
  .card h1 { margin: 0; height: 80px; padding-left: 32px; line-height: 78px; font-size: inherit; font-weight: 400; letter-spacing: 0.400px; background: #f0f2f4; border-bottom: 2px solid #c9cbcd; }
  .card p { margin: 0 32px; line-height: 46px; white-space: nowrap; }
  .card .about { margin-top: 32px; letter-spacing: 0.560px; }
  .card .address-line { margin: 32px 32px; letter-spacing: 0.220px; }

  .map { position: relative; width: 1644px; height: 600px; margin: 0 32px; font-family: Roboto, sans-serif; overflow: hidden; }
  .canvas { display: block; }
  .canvas path, .canvas circle { vector-effect: non-scaling-stroke; }
  .land { fill: #f1f2f4; }
  .water { fill: #a4bff5; }
  .beach { fill: #fbefc9; }
  .commercial { fill: #fcf7e0; }
  .green { fill: #c7e4cd; }
  .deep-green { fill: #b0d9b8; }
  .canal { fill: none; stroke: #a4bff5; stroke-width: 7; }
  .trail { fill: none; stroke: #57a765; stroke-width: 1.600; }
  .dashed { stroke-dasharray: 7 4; }
  .casing path { fill: none; stroke: #dadce1; stroke-linecap: round; stroke-linejoin: round; }
  .paving path { fill: none; stroke: #fff; stroke-linecap: round; stroke-linejoin: round; }
  .arterial .edge { fill: none; stroke: #efb040; stroke-width: 19; }
  .arterial .core { fill: none; stroke: #fae29b; stroke-width: 14.500; }
  .arterial .edge.narrow { stroke-width: 14.500; }
  .arterial .core.narrow { stroke-width: 9; }
  .canvas text { font-family: Roboto, sans-serif; paint-order: stroke; stroke: #fff; stroke-width: 4px; stroke-linejoin: round; }
  .street { fill: #74777b; } .avenue { fill: #4e5257; } .highway { fill: #723a0e; }
  .canvas .area { fill: #5d7a87; stroke: #e4ebf8; }
  .shop { fill: #3871e0; } .food { fill: #c77227; } .museum { fill: #3a8793; }
  .park { fill: #3d8445; } .district { fill: #54585c; } .city { fill: #202124; }
  .canvas .shield { stroke: none; font-size: 18px; fill: #333; font-weight: 500; }
  .canvas .google { font: 500 38px Inter, sans-serif; stroke: #dfe7fb; stroke-width: 3px; }

  .map-type { position: absolute; left: 20px; top: 20px; display: flex; width: 336px; height: 80px; background: #fff; border-radius: 4px; box-shadow: 0 2px 8px #0000004d; font-size: 36px; line-height: 83px; text-align: center; color: #565656; }
  .map-type b { width: 138px; color: #000; font-weight: 600; box-shadow: 1px 0 4px #0003; }
  .map-type span { flex: 1; }
  .controls { position: absolute; right: 20px; top: 20px; }
  .control { width: 80px; height: 80px; display: flex; align-items: center; justify-content: center; background: #fff; border-radius: 4px; box-shadow: 0 2px 8px #0000004d; }
  .control svg { width: 36px; height: 36px; fill: none; stroke: #666; stroke-width: 4; }
  .control.pegman { margin: 146px 0 64px; }
  .pegman svg { height: 62px; stroke-width: 1.500; stroke: none; }
  .control.zooming { height: 162px; flex-direction: column; justify-content: space-between; padding: 22px 10px; }
  .zooming svg { stroke-width: 8; }
  .zooming hr { width: 60px; height: 2px; margin: 0; border: 0; background: #e6e6e6; }
  .map footer { position: absolute; right: 0; bottom: 0; display: flex; height: 28px; gap: 2px; font-size: 20px; line-height: 33px; color: #000; white-space: nowrap; }
  .map footer span { background: #f5f5f5b3; padding: 0 12px 0 10px; }

  .dock {
    width: 2903px; height: 96px; margin: 10px 0 0 61px; border-radius: 28px; border: 2px solid #ffffff30; display: flex; align-items: flex-start; padding: 13px 0 0 12px;
    background: linear-gradient(#0000000a, #ffffff0d), linear-gradient(90deg, #6d8fc0 0, #6b90c3 440px, #bd8a6e 560px, #d68e5a 650px, #cd9157 820px, #d48a5a 980px, #dc7c5a 1100px, #d98558 1300px, #d18a58 1450px, #d9805a 1650px, #e27259 1900px, #df7658 2050px, #dc8f57 2250px, #de8757 2500px, #e0805a 2903px);
    box-shadow: 0 1px 4px #0006;
  }
  .shelf { display: flex; }
  .app { width: 78.350px; position: relative; }
  .app-icon { width: 60px; height: 60px; display: block; overflow: visible; filter: drop-shadow(0 1px 1px #0004); }
  .app i { display: block; width: 8px; height: 8px; margin: 8px 0 0 25px; border-radius: 50%; }
  .app i.running { background: #5a1006; }
  .app:nth-child(-n + 6) i.running { background: #041440; }
  .rule ~ .shelf .app:nth-child(-n + 6) i.running { background: #5a1006; }
  .badge { position: absolute; left: 41px; top: -8px; width: 29px; height: 29px; border-radius: 50%; background: #ea4f3d; color: #fff; font-size: 19px; line-height: 29px; text-align: center; }
  .rule { width: 2px; height: 72px; margin: -3px 25px 0 9px; background: #9c3c24; }
  .stacks { width: 220px; height: 72px; margin-top: -6px; }
  .petal { mix-blend-mode: multiply; opacity: 0.85; }
  .office-letter { font: 700 18px 'Open Sans', sans-serif; fill: #fff; text-anchor: middle; }
  .cal-month { font: 600 13px Inter, sans-serif; fill: #fff; text-anchor: middle; }
  .cal-day { font: 300 36px Inter, sans-serif; fill: #222; text-anchor: middle; }
  .skype { font: 700 42px 'Open Sans', sans-serif; fill: #fff; text-anchor: middle; }
  .spyder { font: 700 34px Inter, sans-serif; fill: #333; text-anchor: middle; }
  .zoom-app { font: 600 17px Inter, sans-serif; fill: #fff; text-anchor: middle; }
</style>
